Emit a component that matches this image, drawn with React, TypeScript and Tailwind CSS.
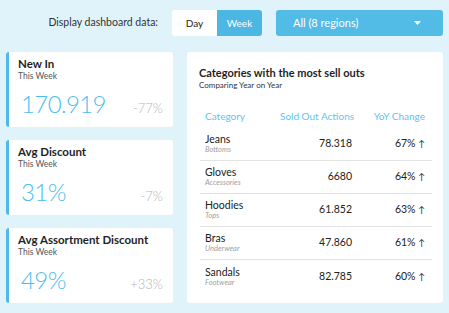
import React from "react";

const font = { fontFamily: "Lato, 'Open Sans', sans-serif" };

function StatCard({ title, value, change }: { title: string; value: string; change: string }) {
  return (
    <div className="h-[75px] bg-white rounded-[3px] border-l-[3px] border-[#4fb9e6] pl-[9px] pr-[10px] pt-[5px] flex flex-col">
      <div className="text-[11.5px] leading-[14px] font-bold text-[#1f1f1f]">{title}</div>
      <div className="text-[8.5px] leading-[10px] text-[#555]">This Week</div>
      <div className="flex items-baseline justify-between mt-[8px] pl-[3px]">
        <span className="text-[24px] leading-[30px] font-light tracking-[-0.6px] text-[#4dbdf0]">{value}</span>
        <span className="text-[13px] leading-[16px] font-light text-[#b5b5b5]">{change}</span>
      </div>
    </div>
  );
}

const rows = [
  { name: "Jeans", cat: "Bottoms", val: "78.318", pct: "67%" },
  { name: "Gloves", cat: "Accessories", val: "6680", pct: "64%" },
  { name: "Hoodies", cat: "Tops", val: "61.852", pct: "63%" },
  { name: "Bras", cat: "Underwear", val: "47.860", pct: "61%" },
  { name: "Sandals", cat: "Footwear", val: "82.785", pct: "60%" },
];

export default function App() {
  return (
    <div style={font} className="w-[449px] h-[313px] bg-[#e0f3fb] px-[6px] pt-[10px] overflow-hidden">
      <div className="flex items-center justify-end gap-[14px] h-[26px]">
        <span className="text-[10.5px] text-[#333]">Display dashboard data:</span>
        <div className="flex h-[26px] rounded-[3px] overflow-hidden text-[10px]">
          <div className="w-[45px] bg-white flex items-center justify-center text-[#222]">Day</div>
          <div className="w-[45px] bg-[#4cb7e3] flex items-center justify-center text-white">Week</div>
        </div>
        <div className="w-[167px] h-[26px] rounded-[3px] bg-[#52bce6] flex items-center justify-between pl-[17px] pr-[22px] text-white text-[11px]">
          <span>All (8 regions)</span>
          <svg width="7" height="4" viewBox="0 0 7 4"><path d="M0 0h7L3.5 4z" fill="white" /></svg>
        </div>
      </div>
      <div className="flex gap-[14px] mt-[16px]">
        <div className="w-[167px] flex flex-col gap-[13px]">
          <StatCard title="New In" value="170.919" change="-77%" />
          <StatCard title="Avg Discount" value="31%" change="-7%" />
          <StatCard title="Avg Assortment Discount" value="49%" change="+33%" />
        </div>
        <div className="flex-1 h-[251px] bg-white rounded-[3px] pt-[14px] pl-[12px]">
          <div className="text-[11px] leading-[13px] font-bold text-[#1f1f1f]">Categories with the most sell outs</div>
          <div className="text-[8px] leading-[10px] mt-[1px] text-[#333]">Comparing Year on Year</div>
          <div className="ml-[1px] mr-[11px] mt-[14px]">
            <div className="flex items-center h-[24px] text-[10px] text-[#5cc6f2] whitespace-nowrap">
              <div className="w-[80px] pl-[5px]">Category</div>
              <div className="w-[72px] text-right">Sold Out Actions</div>
              <div className="w-[73px] text-right">YoY Change</div>
            </div>
            {rows.map((r, i) => (
              <div key={r.name} className={`flex items-center h-[33px] text-[#222] ${i < rows.length - 1 ? "border-b border-[#e3e3e3]" : ""}`}>
                <div className="w-[80px] pl-[5px] flex flex-col">
                  <span className="text-[10.5px] leading-[12px]">{r.name}</span>
                  <span className="text-[7.5px] leading-[10px] italic text-[#a0a0a0]">{r.cat}</span>
                </div>
                <div className="w-[72px] text-right text-[10.5px]">{r.val}</div>
                <div className="w-[73px] text-right text-[10.5px]">{r.pct} <span className="text-[9px]">↑</span></div>
              </div>
            ))}
          </div>
        </div>
      </div>
    </div>
  );
}
